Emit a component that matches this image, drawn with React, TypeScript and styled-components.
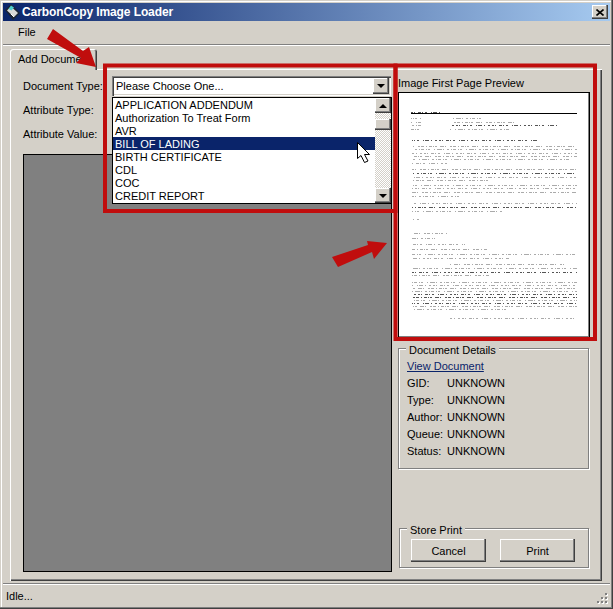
import styled, { createGlobalStyle } from 'styled-components';

const GlobalStyle = createGlobalStyle`
  html, body {
    margin: 0;
    padding: 0;
    background: #d4d0c8;
  }
  * {
    box-sizing: border-box;
  }
`;

const Window = styled.div`
  position: relative;
  display: flex;
  flex-direction: column;
  width: 613px;
  height: 609px;
  padding: 3px 3px 2px;
  overflow: hidden;
  background: #d4d0c8;
  color: #000;
  font-family: 'Liberation Sans', Arial, sans-serif;
  font-size: 11px;
  box-shadow:
    inset -1px -1px 0 #404040,
    inset -2px -2px 0 #808080,
    inset 1px 1px 0 #d4d0c8,
    inset 2px 2px 0 #fff;
`;

const TitleBar = styled.div`
  display: flex;
  align-items: center;
  flex: 0 0 18px;
  padding: 0 2px;
  background: linear-gradient(to right, #0a246a, #a6caf0);
`;

const TitleIcon = styled.svg`
  flex: none;
  width: 16px;
  height: 16px;
`;

const TitleText = styled.span`
  flex: 1;
  margin-left: 1px;
  color: #fff;
  font-weight: bold;
  font-size: 12px;
  letter-spacing: -0.1px;
`;

const CloseButton = styled.div`
  display: flex;
  align-items: center;
  justify-content: center;
  width: 16px;
  height: 14px;
  background: #d4d0c8;
  box-shadow:
    inset -1px -1px 0 #404040,
    inset -2px -2px 0 #808080,
    inset 1px 1px 0 #fff;
`;

const MenuBar = styled.div`
  display: flex;
  align-items: center;
  flex: 0 0 25px;
  padding: 0 0 3px 15px;
  border-bottom: 1px solid #fff;
  box-shadow: inset 0 -1px 0 #808080;
`;

const Content = styled.div`
  display: flex;
  flex-direction: column;
  flex: 1;
  min-height: 0;
  padding: 3px 8px 0 7px;
`;

const Tab = styled.div`
  position: relative;
  z-index: 1;
  width: 87px;
  height: 21px;
  margin-bottom: -1px;
  padding: 4px 0 0 8px;
  border-radius: 3px 3px 0 0;
  white-space: nowrap;
  overflow: hidden;
  background: #d4d0c8;
  box-shadow:
    inset 1px 1px 0 #fff,
    inset -1px 0 0 #404040,
    inset -2px 0 0 #808080;
`;

const TabPanel = styled.div`
  display: flex;
  flex: 1;
  gap: 6px;
  min-height: 0;
  padding: 5px 10px 9px 13px;
  box-shadow:
    inset 1px 1px 0 #fff,
    inset -1px -1px 0 #404040,
    inset -2px -2px 0 #808080;
`;

const LeftColumn = styled.div`
  display: flex;
  flex-direction: column;
  width: 369px;
`;

const FormRow = styled.div`
  display: flex;
  align-items: center;
  flex: 0 0 24px;
`;

const FormLabel = styled.span`
  flex: 0 0 89px;
`;

const SelectWrap = styled.div`
  position: relative;
  flex: 0 0 279px;
  height: 20px;
`;

const SelectBox = styled.div`
  display: flex;
  align-items: center;
  justify-content: space-between;
  height: 20px;
  padding: 0 2px 0 4px;
  background: #fff;
  box-shadow:
    inset 1px 1px 0 #808080,
    inset 2px 2px 0 #404040,
    inset -1px -1px 0 #fff,
    inset -2px -2px 0 #d4d0c8;
`;

const ArrowButton = styled.div<{ $h: number }>`
  display: flex;
  align-items: center;
  justify-content: center;
  flex: none;
  width: 16px;
  height: ${(p) => p.$h}px;
  background: #d4d0c8;
  box-shadow:
    inset -1px -1px 0 #404040,
    inset -2px -2px 0 #808080,
    inset 1px 1px 0 #fff;
`;

const Triangle = styled.div<{ $up?: boolean }>`
  width: 0;
  height: 0;
  border-left: 4px solid transparent;
  border-right: 4px solid transparent;
  ${(p) => (p.$up ? 'border-bottom: 4px solid #000;' : 'border-top: 4px solid #000;')}
`;

const DropList = styled.div`
  position: absolute;
  top: 21px;
  left: 0;
  z-index: 2;
  display: flex;
  width: 280px;
  height: 107px;
  background: #fff;
  border: 1px solid #000;
`;

const ListItems = styled.div`
  flex: 1;
`;

const ListItem = styled.div<{ $selected?: boolean }>`
  height: 13px;
  padding-left: 2px;
  line-height: 14px;
  white-space: nowrap;
  background: ${(p) => (p.$selected ? '#0a246a' : '#fff')};
  color: ${(p) => (p.$selected ? '#fff' : '#000')};
`;

const ScrollBar = styled.div`
  display: flex;
  flex-direction: column;
  flex: 0 0 16px;
`;

const ScrollTrack = styled.div`
  flex: 1;
  padding-top: 6px;
  background: repeating-conic-gradient(#d4d0c8 0 25%, #fff 0 50%) 0 0 / 2px 2px;
`;

const ScrollThumb = styled.div`
  height: 11px;
  background: #d4d0c8;
  box-shadow:
    inset -1px -1px 0 #404040,
    inset -2px -2px 0 #808080,
    inset 1px 1px 0 #fff;
`;

const ImageArea = styled.div`
  flex: 1;
  margin-top: 8px;
  background: #808080;
  border: 1px solid #000;
`;

const RightColumn = styled.div`
  display: flex;
  flex-direction: column;
  width: 192px;
  padding-bottom: 4px;
`;

const PreviewLabel = styled.div`
  flex: 0 0 18px;
  line-height: 17px;
  padding-top: 1px;
`;

const PreviewBox = styled.div`
  flex: 0 0 246px;
  background: #fff;
  border: 1px solid #000;
  box-shadow: inset -1px -1px 0 #808080;
`;

const PreviewPage = styled.svg`
  display: block;
  width: 190px;
  height: 244px;
`;

const Group = styled.div<{ $h: number }>`
  position: relative;
  flex: 0 0 ${(p) => p.$h}px;
  border: 1px solid #808080;
  box-shadow: 1px 1px 0 #fff, inset 1px 1px 0 #fff;
`;

const DetailsGroup = styled(Group)`
  width: 191px;
  margin-top: 10px;
  padding: 9px 0 0 8px;
`;

const StoreGroup = styled(Group)`
  display: flex;
  gap: 14px;
  width: 190px;
  margin: auto 0 0 1px;
  padding: 10px 0 0 11px;
`;

const GroupLegend = styled.span`
  position: absolute;
  top: -6px;
  left: 7px;
  padding: 0 3px;
  line-height: 14px;
  background: #d4d0c8;
`;

const DocLink = styled.a`
  display: block;
  height: 17px;
  line-height: 17px;
  color: #0a246a;
  text-decoration: underline;
`;

const DetailRow = styled.div`
  display: flex;
  height: 17px;
  line-height: 17px;
`;

const DetailLabel = styled.span`
  flex: 0 0 40px;
`;

const PushButton = styled.button`
  width: 75px;
  height: 23px;
  padding: 0;
  border: 0;
  background: #d4d0c8;
  color: #000;
  font: inherit;
  box-shadow:
    inset -1px -1px 0 #404040,
    inset -2px -2px 0 #808080,
    inset 1px 1px 0 #fff;
`;

const StatusBar = styled.div`
  display: flex;
  align-items: center;
  justify-content: space-between;
  flex: 0 0 24px;
  margin-top: 2px;
  padding: 0 2px 0 3px;
  border-top: 1px solid #808080;
  box-shadow: inset 0 1px 0 #fff;
`;

const Grip = styled.svg`
  align-self: flex-end;
  width: 12px;
  height: 12px;
  margin-bottom: 2px;
`;

const Annotations = styled.svg`
  position: absolute;
  top: 0;
  left: 0;
  z-index: 5;
  width: 613px;
  height: 609px;
  pointer-events: none;
`;

const listOptions = [
  'APPLICATION ADDENDUM',
  'Authorization To Treat Form',
  'AVR',
  'BILL OF LADING',
  'BIRTH CERTIFICATE',
  'CDL',
  'COC',
  'CREDIT REPORT',
];

const details = ['GID:', 'Type:', 'Author:', 'Queue:', 'Status:'];

const dashes = [
  '2 1 1 3 3 1 1 2 2 4 1 1 4 2 1 3 2 2',
  '1 2 3 1 1 1 2 3 4 1 1 4 2 1 3 2',
  '3 2 1 1 2 4 1 2 5 1 1 3 2 2 1 1',
];

// tiny scanned page: [y, x1, x2, dark] relative to the preview box
const pageLines: [number, number, number, boolean?][] = [
  [19, 12, 44, true],
  [25, 12, 22], [25, 51, 82],
  [29, 12, 22], [29, 51, 115],
  [32, 12, 22], [32, 51, 160, true],
  [36, 12, 22], [36, 51, 112],
  [47, 13, 138, true],
  [53, 13, 178], [56, 13, 178], [60, 13, 178], [63, 13, 178], [66, 13, 170], [70, 13, 48],
  [76, 13, 178], [80, 13, 178, true], [84, 13, 178], [87, 13, 90],
  [92, 13, 178], [95, 13, 178], [99, 13, 178], [103, 13, 60],
  [110, 13, 178], [114, 13, 178, true], [118, 13, 105],
  [126, 13, 20],
  [140, 13, 48], [145, 13, 36], [151, 13, 66], [156, 13, 88],
  [161, 13, 178], [165, 13, 110],
  [171, 51, 165], [175, 13, 178], [179, 13, 178, true], [182, 13, 90],
  [189, 13, 178], [192, 13, 178], [195, 13, 178], [198, 13, 178], [201, 13, 178, true],
  [204, 13, 178, true], [207, 13, 178], [210, 13, 178, true], [213, 13, 178], [216, 13, 110],
  [225, 51, 175],
];

function App() {
  return (
    <Window>
      <GlobalStyle />
      <TitleBar>
        <TitleIcon viewBox="0 0 16 16">
          <path d="M0 6 6 0l9 9-7 7z" fill="#1c2433" />
          <path d="M2 6.5 6 2.5l7 6.5-4 4z" fill="#d8d8d8" />
          <path d="M3.5 5 6 1.5l3 2-2.5 3z" fill="#4fd0d0" />
          <path d="M6 10l3 3" stroke="#fff" fill="none" />
        </TitleIcon>
        <TitleText>CarbonCopy Image Loader</TitleText>
        <CloseButton>
          <svg width="8" height="7" viewBox="0 0 8 7">
            <path d="M0.5 0.5 7.5 6.5M7.5 0.5 0.5 6.5" stroke="#000" strokeWidth="1.6" />
          </svg>
        </CloseButton>
      </TitleBar>
      <MenuBar>File</MenuBar>
      <Content>
        <Tab>Add Document</Tab>
        <TabPanel>
          <LeftColumn>
            <FormRow>
              <FormLabel>Document Type:</FormLabel>
              <SelectWrap>
                <SelectBox>
                  Please Choose One...
                  <ArrowButton $h={16}>
                    <Triangle />
                  </ArrowButton>
                </SelectBox>
                <DropList>
                  <ListItems>
                    {listOptions.map((o) => (
                      <ListItem key={o} $selected={o === 'BILL OF LADING'}>
                        {o}
                      </ListItem>
                    ))}
                  </ListItems>
                  <ScrollBar>
                    <ArrowButton $h={15}>
                      <Triangle $up />
                    </ArrowButton>
                    <ScrollTrack>
                      <ScrollThumb />
                    </ScrollTrack>
                    <ArrowButton $h={15}>
                      <Triangle />
                    </ArrowButton>
                  </ScrollBar>
                </DropList>
              </SelectWrap>
            </FormRow>
            <FormRow>
              <FormLabel>Attribute Type:</FormLabel>
            </FormRow>
            <FormRow>
              <FormLabel>Attribute Value:</FormLabel>
            </FormRow>
            <ImageArea />
          </LeftColumn>
          <RightColumn>
            <PreviewLabel>Image First Page Preview</PreviewLabel>
            <PreviewBox>
              <PreviewPage viewBox="0 0 190 244" shapeRendering="crispEdges">
                <rect x="12" y="20" width="166" height="1" fill="#000" />
                {pageLines.map(([y, x1, x2, dark], i) => (
                  <line
                    key={i}
                    x1={x1}
                    x2={x2}
                    y1={y}
                    y2={y}
                    stroke={dark ? '#555' : '#aaa'}
                    strokeDasharray={dashes[i % 3]}
                    strokeDashoffset={i * 5}
                  />
                ))}
              </PreviewPage>
            </PreviewBox>
            <DetailsGroup $h={121}>
              <GroupLegend>Document Details</GroupLegend>
              <DocLink href="#">View Document</DocLink>
              {details.map((d) => (
                <DetailRow key={d}>
                  <DetailLabel>{d}</DetailLabel>
                  UNKNOWN
                </DetailRow>
              ))}
            </DetailsGroup>
            <StoreGroup $h={40}>
              <GroupLegend>Store Print</GroupLegend>
              <PushButton>Cancel</PushButton>
              <PushButton>Print</PushButton>
            </StoreGroup>
          </RightColumn>
        </TabPanel>
      </Content>
      <StatusBar>
        Idle...
        <Grip viewBox="0 0 12 12" shapeRendering="crispEdges">
          {[
            [9, 0], [9, 4], [5, 4], [9, 8], [5, 8], [1, 8],
          ].map(([x, y]) => (
            <g key={`${x}-${y}`}>
              <rect x={x + 1} y={y + 1} width="2" height="2" fill="#fff" />
              <rect x={x} y={y} width="2" height="2" fill="#808080" />
            </g>
          ))}
        </Grip>
      </StatusBar>
      <Annotations viewBox="0 0 613 609">
        <path d="M105 65.5H395.5V211H105Z" fill="none" stroke="#c00d0d" strokeWidth="4" />
        <path d="M395.5 65.5H595V339H395.5Z" fill="none" stroke="#c00d0d" strokeWidth="4" />
        <polygon points="53,29 83,51 89,47 96,67 76,63 81,58 47,39" fill="#c00d0d" />
        <polygon points="332,257 368,245 367,241 387,243 374,259 372,252 338,267" fill="#c00d0d" />
        <path
          d="M357.5 142.5V158.5L361 155.5 364.5 162.5 368 161 364.5 154.5H369.5Z"
          fill="#fff"
          stroke="#000"
          strokeWidth="1"
        />
      </Annotations>
    </Window>
  );
}

export default App;
